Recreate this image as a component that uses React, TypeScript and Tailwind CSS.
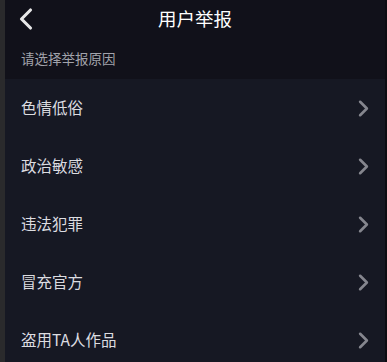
import { ChevronLeft, ChevronRight } from 'lucide-react';

const REASONS = ['色情低俗', '政治敏感', '违法犯罪', '冒充官方', '盗用TA人作品'];

export default function App() {
    return (
        <div className="flex h-[362px] w-[387px] overflow-hidden bg-[#161823]" style={{ fontFamily: '"Noto Sans CJK SC", "Noto Sans", sans-serif' }}>
            <div className="w-[5px] shrink-0 bg-[#2a2a2c]" />
            <div className="flex min-w-0 flex-1 flex-col">
                <div className="bg-[#11111a]">
                    <div className="relative flex h-[38px] items-center justify-center">
                        <ChevronLeft className="absolute left-[3px] top-[1px] h-[36px] w-[36px] text-white/90" strokeWidth={2.1} />
                        <span className="text-[18.5px] text-white">用户举报</span>
                    </div>
                    <div className="flex h-[41px] items-center px-4 text-[13.5px] text-[#a2a3ab]">请选择举报原因</div>
                </div>
                {REASONS.map(r => (
                    <div key={r} className="flex h-[58px] shrink-0 items-center justify-between pl-4 pr-[8px]">
                        <span className="text-[15.5px] text-[#dcdce0]">{r}</span>
                        <ChevronRight className="mt-[1px] h-[27px] w-[27px] text-[#85868e]" strokeWidth={2.3} />
                    </div>
                ))}
            </div>
            <div className="w-[2px] shrink-0 bg-[#0c0c12]" />
        </div>
    );
}
